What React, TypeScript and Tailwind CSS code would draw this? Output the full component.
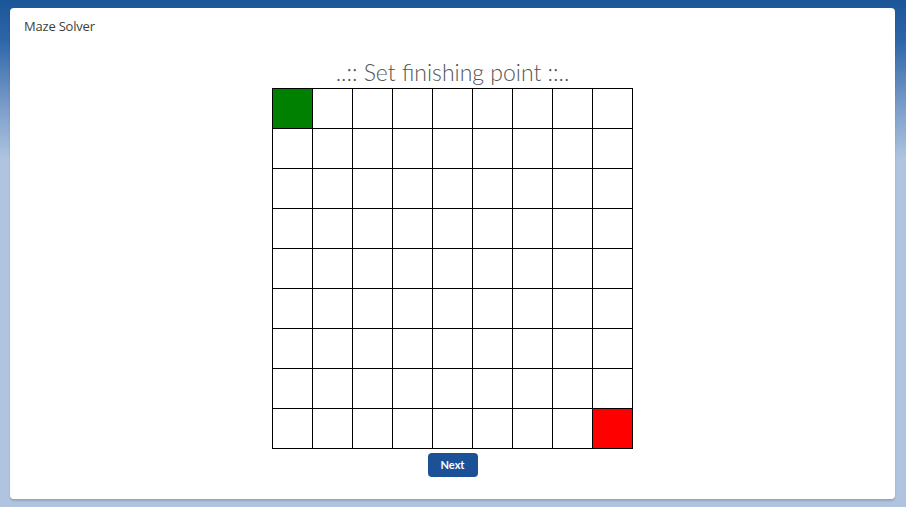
const SIZE = 9

function Cell({ index }: { index: number }) {
  let color = 'bg-white'
  if (index === 0) color = 'bg-[#008000]'
  if (index === SIZE * SIZE - 1) color = 'bg-[#ff0000]'
  return <div className={`w-[39px] h-[39px] ${color}`} />
}

export default function App() {
  const cells = Array.from({ length: SIZE * SIZE }, (_, i) => i)

  return (
    <div className="w-[906px] h-[507px] bg-[linear-gradient(180deg,#1b5699_0px,#2d66a8_40px,#7e9fcc_110px,#b0c4df_160px,#b0c4df_100%)] pt-2 pl-[10px] pr-[11px] pb-2 font-['Lato','Noto_Sans',sans-serif]">
      <div className="h-[491px] bg-white rounded-[4px] shadow-[0_2px_2px_rgba(0,0,0,0.15)] flex flex-col">
        <div className="px-[14px] pt-[10px] text-[13px] leading-[16px] text-[#3e3e3c] font-['Open_Sans','Noto_Sans',sans-serif] tracking-[-0.2px]">
          Maze Solver
        </div>
        <div className="flex flex-col items-center">
          <h1 className="mt-[23px] text-[23px] leading-[31px] font-light text-[#555555]">
            ..:: Set finishing point ::..
          </h1>
          <div className="grid grid-cols-9 gap-px bg-black p-px">
            {cells.map((i) => (
              <Cell key={i} index={i} />
            ))}
          </div>
          <button
            type="button"
            className="mt-[4px] w-[50px] h-[24px] rounded-[4px] bg-[#1b5297] text-white text-[11px] font-bold"
          >
            Next
          </button>
        </div>
      </div>
    </div>
  )
}
